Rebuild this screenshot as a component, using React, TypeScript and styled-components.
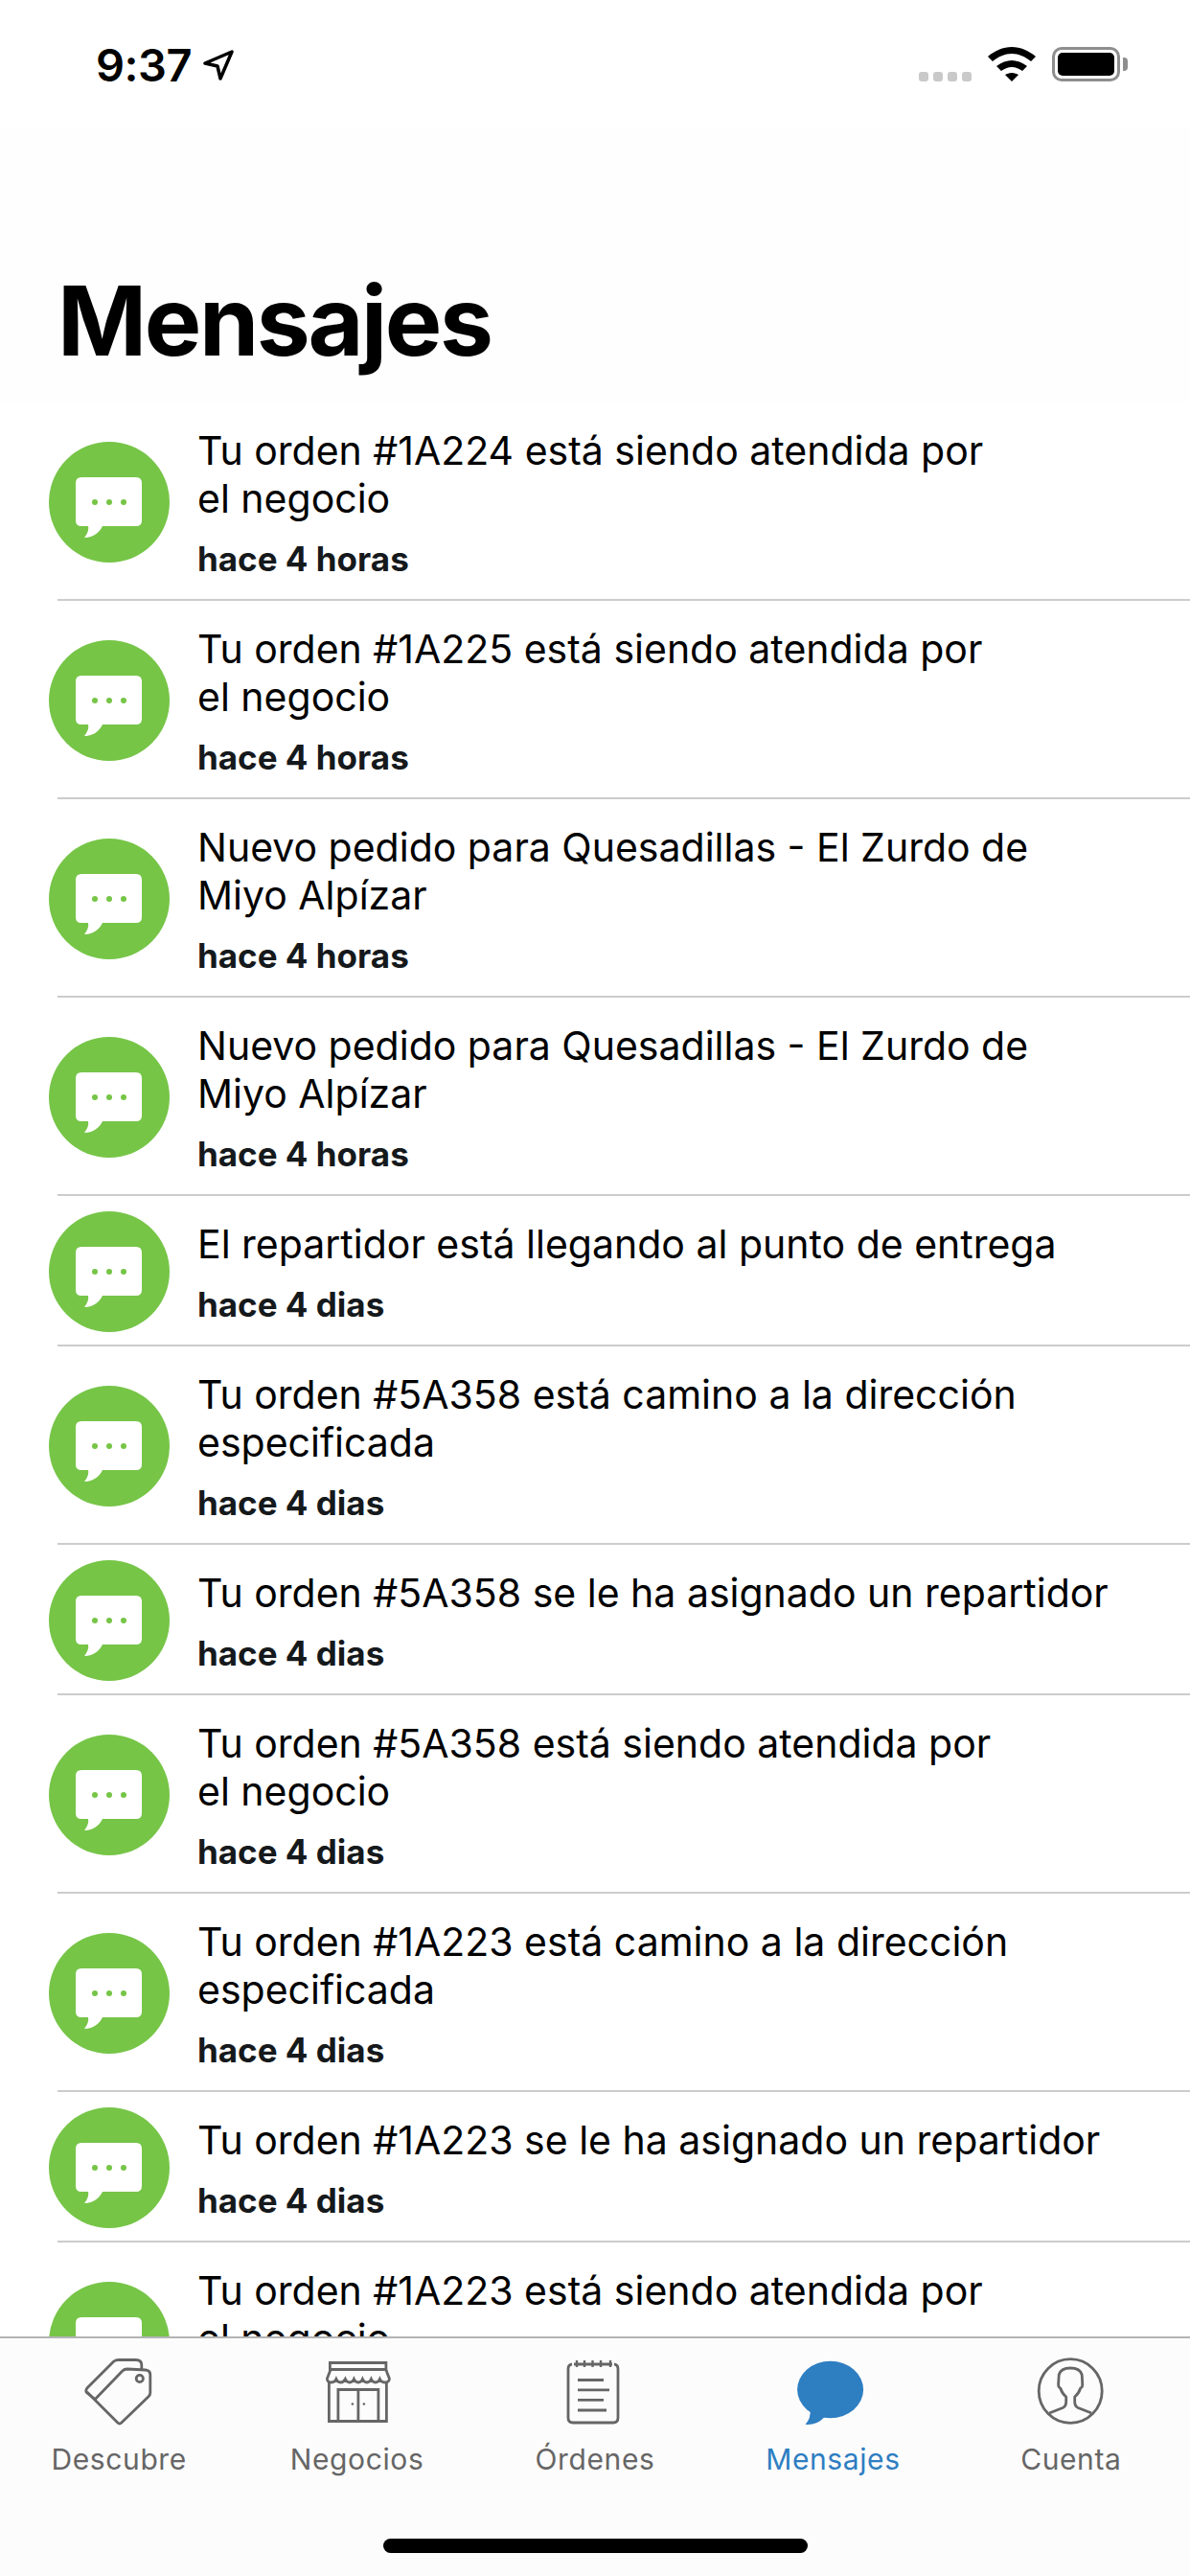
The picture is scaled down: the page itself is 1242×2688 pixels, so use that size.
import styled, { createGlobalStyle } from "styled-components";

const GlobalStyle = createGlobalStyle`
  html, body {
    margin: 0;
    padding: 0;
    background: #ffffff;
  }
  * {
    box-sizing: border-box;
  }
`;

type Message = { text: string[]; when: string };

const messages: Message[] = [
  { text: ["Tu orden #1A224 está siendo atendida por", "el negocio"], when: "hace 4 horas" },
  { text: ["Tu orden #1A225 está siendo atendida por", "el negocio"], when: "hace 4 horas" },
  { text: ["Nuevo pedido para Quesadillas - El Zurdo de", "Miyo Alpízar"], when: "hace 4 horas" },
  { text: ["Nuevo pedido para Quesadillas - El Zurdo de", "Miyo Alpízar"], when: "hace 4 horas" },
  { text: ["El repartidor está llegando al punto de entrega"], when: "hace 4 dias" },
  { text: ["Tu orden #5A358 está camino a la dirección", "especificada"], when: "hace 4 dias" },
  { text: ["Tu orden #5A358 se le ha asignado un repartidor"], when: "hace 4 dias" },
  { text: ["Tu orden #5A358 está siendo atendida por", "el negocio"], when: "hace 4 dias" },
  { text: ["Tu orden #1A223 está camino a la dirección", "especificada"], when: "hace 4 dias" },
  { text: ["Tu orden #1A223 se le ha asignado un repartidor"], when: "hace 4 dias" },
  { text: ["Tu orden #1A223 está siendo atendida por", "el negocio"], when: "hace 4 dias" },
];

function Tag() {
  return (
    <svg width="90" height="90" viewBox="-0.8 0 90 90" fill="none" stroke="#666" strokeWidth="2.8" strokeLinejoin="round">
      <path d="M20 54 L11 47 Q9 45 11 42 L39 14 Q41 12.5 44 12.5 L62 12.5 Q68 12.5 68 18 L68 22.5" />
      <path d="M20 53 L48 24 Q50 22 53 22 L72 23 Q77 23.5 77 28 L77 47 Q77 49 75 51 L47 78 Q45 80 43 78 L11 46" />
      <circle cx="66" cy="32" r="3.6" />
    </svg>
  );
}

function Store() {
  return (
    <svg width="90" height="90" viewBox="-2.4 0 90 90" fill="none" stroke="#666" strokeWidth="2.8">
      <path d="M13 36 V76.5 H73 V36" />
      <path d="M14 15.5 H72.5 V22.5 H14 Z" />
      <path d="M14.5 23 L11 32 Q11 36 15.5 36 Q19 36 20.5 32.5 Q22 36 25 36 Q28 36 30 32.5 Q31.5 36 34.5 36 Q37.5 36 39 32.5 Q40.5 36 43.5 36 Q46.5 36 48 32.5 Q49.5 36 52.5 36 Q55.5 36 57 32.5 Q58.5 36 61.5 36 Q64.5 36 66 32.5 Q67.5 36 71 36 Q76 36 76 32 L72.5 23" />
      <path d="M22.5 76 V43.5 H64.5 V76 M43.5 43.5 V76" />
      <circle cx="37.5" cy="58.5" r="1.3" fill="#666" stroke="none" />
      <circle cx="49.5" cy="58.5" r="1.3" fill="#666" stroke="none" />
    </svg>
  );
}

function Orders() {
  return (
    <svg width="90" height="90" viewBox="1 0 90 90" fill="none" stroke="#666" strokeWidth="2.8">
      <path d="M22 17 Q18 17.5 18 22 V73 Q18 78 23 78 H65 Q70 78 70 73 V22 Q70 17.5 66 17 M24 17 H64" />
      <path d="M27 13 V20 M35 13 V20 M43.5 13 V20 M52 13 V20 M62 13 V20" strokeWidth="2.4" />
      <path d="M28 33.5 H55 M28 43.8 H61 M28 54.3 H55 M28 65 H58" />
    </svg>
  );
}

function Bubble() {
  return (
    <svg width="90" height="90" viewBox="1.4 0 90 90" fill="#2e7ec2">
      <ellipse cx="44" cy="43.5" rx="34.5" ry="29.7" />
      <path d="M23 64 Q24 73 18 80 Q30 81 38 72 Z" />
    </svg>
  );
}

function Account() {
  return (
    <svg width="90" height="90" viewBox="0.8 0 90 90" fill="none" stroke="#666" strokeWidth="2.8" strokeLinejoin="round">
      <ellipse cx="45" cy="45" rx="33" ry="33.3" />
      <path d="M23 68 L37 62.5 Q40.5 61 40.5 56 L40.5 51 Q36.5 48 34.5 42 Q32 41 32.5 37 L33 28 Q35 21 45 21 Q55 21 57 28 L57.5 37 Q58 41 55.5 42 Q53.5 48 49.5 51 L49.5 56 Q49.5 61 53 62.5 L67 68" />
    </svg>
  );
}

const tabs = [
  { label: "Descubre", icon: <Tag /> },
  { label: "Negocios", icon: <Store /> },
  { label: "Órdenes", icon: <Orders /> },
  { label: "Mensajes", icon: <Bubble />, active: true },
  { label: "Cuenta", icon: <Account /> },
];

export default function App() {
  return (
    <>
      <GlobalStyle />
      <Screen>
        <StatusBar>
          <Clock>
            9:37
            <svg width="32" height="32" viewBox="0 0 32 32" fill="none" stroke="#000" strokeWidth="3.5" strokeLinejoin="round">
              <path d="M2 14 L30 2 L18 30 L15 17 Z" />
            </svg>
          </Clock>
          <StatusIcons>
            <Signal>
              <i />
              <i />
              <i />
              <i />
            </Signal>
            <svg width="50" height="36" viewBox="0 0 50 36" fill="#000">
              <path d="M25 0 C34 0 43 4 50 10 L45 15 C39 10 32 7 25 7 C18 7 11 10 5 15 L0 10 C7 4 16 0 25 0 Z" />
              <path d="M25 14 C30 14 36 16 41 20 L36 25 C33 23 29 21 25 21 C21 21 17 23 14 25 L9 20 C14 16 20 14 25 14 Z" />
              <path d="M25 27 C28 27 30 28 32 29 L25 36 L18 29 C20 28 22 27 25 27 Z" />
            </svg>
            <Battery>
              <span />
            </Battery>
          </StatusIcons>
        </StatusBar>
        <Title>Mensajes</Title>
        <List>
          {messages.map((m, i) => (
            <Row key={i}>
              <Avatar>
                <svg width="70" height="63" viewBox="0 0 70 63">
                  <path
                    fill="#fff"
                    d="M6 0 H63 Q69 0 69 6 V45 Q69 51 63 51 H28 C25 57 19 63 9 63 C12 59 14 55 13 51 H6 Q0 51 0 45 V6 Q0 0 6 0 Z"
                  />
                  <circle cx="20" cy="26" r="3" fill="#76c547" />
                  <circle cx="35" cy="26" r="3" fill="#76c547" />
                  <circle cx="50" cy="26" r="3" fill="#76c547" />
                </svg>
              </Avatar>
              <Body>
                <Text>
                  {m.text.map((line) => (
                    <span key={line}>{line}</span>
                  ))}
                </Text>
                <When>{m.when}</When>
              </Body>
            </Row>
          ))}
        </List>
        <TabBar>
          <Tabs>
            {tabs.map((t) => (
              <Tab key={t.label} $active={!!t.active}>
                {t.icon}
                <span>{t.label}</span>
              </Tab>
            ))}
          </Tabs>
          <HomeBar />
        </TabBar>
      </Screen>
    </>
  );
}

const Screen = styled.div`
  width: 1242px;
  height: 2688px;
  display: flex;
  flex-direction: column;
  overflow: hidden;
  background: #ffffff;
  font-family: Inter, "Liberation Sans", sans-serif;
  color: #000;
`;

const StatusBar = styled.div`
  height: 132px;
  flex: none;
  display: flex;
  justify-content: space-between;
  align-items: flex-start;
  padding: 42px 73px 0 100px;
`;

const Clock = styled.div`
  display: flex;
  align-items: center;
  gap: 12px;
  font-size: 47px;
  font-weight: 600;
  line-height: 52px;
  letter-spacing: -0.5px;
`;

const StatusIcons = styled.div`
  display: flex;
  align-items: flex-end;
  margin-top: 7px;
  gap: 17px;
`;

const Signal = styled.div`
  display: flex;
  gap: 5px;
  i {
    width: 10px;
    height: 10px;
    border-radius: 3px;
    background: #c9c9c9;
  }
`;

const Battery = styled.div`
  position: relative;
  width: 71px;
  height: 36px;
  border: 3px solid #8e8e8e;
  border-radius: 10px;
  padding: 3px;
  span {
    display: block;
    height: 100%;
    background: #000;
    border-radius: 5px;
  }
  &::after {
    content: "";
    position: absolute;
    right: -11px;
    top: 8px;
    width: 5px;
    height: 14px;
    background: #8e8e8e;
    border-radius: 0 4px 4px 0;
  }
`;

const Title = styled.h1`
  flex: none;
  height: 288px;
  margin: 0;
  padding: 143px 0 0 60px;
  font-size: 100px;
  font-weight: 700;
  line-height: 120px;
  letter-spacing: -2.4px;
  background: #fefefe;
`;

const List = styled.div`
  flex: 1;
  min-height: 0;
  overflow: hidden;
`;

const Row = styled.div`
  position: relative;
  display: flex;
  align-items: center;
  padding-left: 51px;
  gap: 29px;
  &::after {
    content: "";
    position: absolute;
    left: 60px;
    right: 0;
    bottom: 0;
    height: 2px;
    background: #cccccc;
  }
`;

const Avatar = styled.div`
  flex: none;
  width: 126px;
  height: 126px;
  border-radius: 50%;
  background: #76c547;
  display: flex;
  align-items: center;
  justify-content: center;
  padding-top: 11px;
`;

const Body = styled.div`
  display: flex;
  flex-direction: column;
  padding: 25px 0 24px;
`;

const Text = styled.div`
  display: flex;
  flex-direction: column;
  font-size: 41px;
  line-height: 50px;
  font-weight: 400;
`;

const When = styled.div`
  margin-top: 18px;
  font-size: 35px;
  line-height: 40px;
  font-weight: 700;
  color: #15191c;
`;

const TabBar = styled.div`
  flex: none;
  height: 250px;
  border-top: 2px solid #b4b4b4;
  background: #fcfcfc;
  display: flex;
  flex-direction: column;
  align-items: center;
`;

const Tabs = styled.div`
  width: 100%;
  display: grid;
  grid-template-columns: repeat(5, 1fr);
  padding-top: 10px;
`;

const Tab = styled.div<{ $active: boolean }>`
  display: flex;
  flex-direction: column;
  align-items: center;
  gap: 6px;
  font-size: 30px;
  line-height: 40px;
  letter-spacing: 0.6px;
  color: ${(p) => (p.$active ? "#2e7ec2" : "#666666")};
`;

const HomeBar = styled.div`
  width: 443px;
  height: 15px;
  margin-top: 63px;
  border-radius: 8px;
  background: #000;
`;
